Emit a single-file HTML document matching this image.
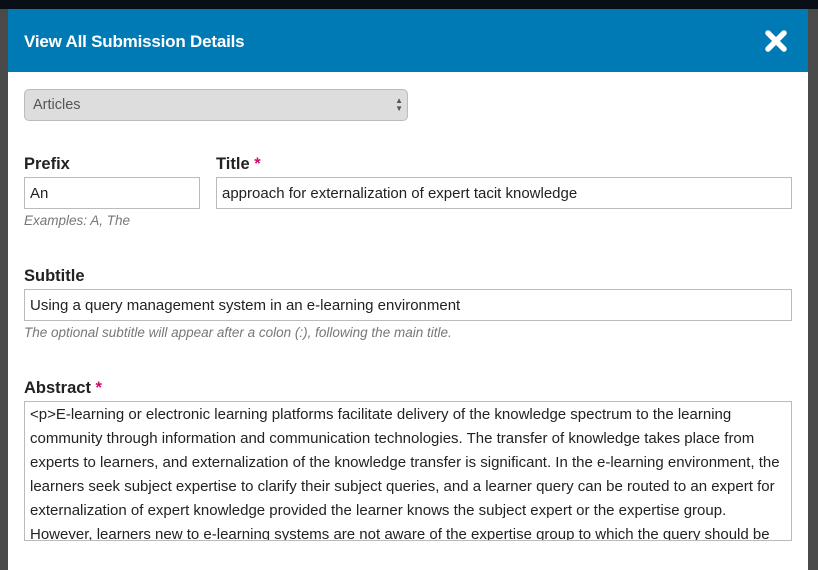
<!DOCTYPE html>
<html><head><style>
*{box-sizing:border-box;margin:0;padding:0}
body{width:818px;height:570px;overflow:hidden;background:#4a4a4a;font-family:"Liberation Sans",sans-serif;position:relative}
.top{position:absolute;left:0;top:0;width:818px;height:9px;background:#0a0f17}
.modal{position:absolute;left:8px;top:9px;width:800px;height:561px;background:#fff}
.hd{height:63px;background:#007ab5;color:#fff;font-weight:bold;font-size:17px;padding:23px 0 0 16px;letter-spacing:-0.2px}
.x{position:absolute;left:756px;top:20px;width:24px;height:24px}
.abs{position:absolute}
.lbl{font-weight:bold;font-size:16.5px;color:#222}
.req{color:#d00a6c}
.in{border:1px solid #bbb;font-size:15px;color:#222;padding:7px 5px 0;height:32px;white-space:nowrap}
.hint{font-style:italic;font-size:13.5px;color:#777}
.sel{background:#ddd;border:1px solid #bbb;border-radius:5px;font-size:14.5px;color:#555;padding:7px 8px}
.ta{border:1px solid #bbb;font-size:15px;color:#222;line-height:24px;padding:1px 5px 0;overflow:hidden;white-space:nowrap}
</style></head><body>
<div class="top"></div>
<div class="modal">
<div class="hd">View All Submission Details</div>
<svg class="x" viewBox="0 0 24 24"><path d="M4 4L20 20M20 4L4 20" stroke="#fff" stroke-width="5.5" stroke-linecap="round"/></svg>
<div class="abs sel" style="left:16px;top:80px;width:384px;height:32px">Articles<span style="position:absolute;right:4px;top:7px;font-size:8px;line-height:8px;color:#555">▲<br>▼</span></div>
<div class="abs lbl" style="left:16px;top:146px">Prefix</div>
<div class="abs lbl" style="left:208px;top:146px">Title <span class="req">*</span></div>
<div class="abs in" style="left:16px;top:168px;width:176px">An</div>
<div class="abs in" style="left:208px;top:168px;width:576px">approach for externalization of expert tacit knowledge</div>
<div class="abs hint" style="left:16px;top:204px">Examples: A, The</div>
<div class="abs lbl" style="left:16px;top:258px">Subtitle</div>
<div class="abs in" style="left:16px;top:280px;width:768px">Using a query management system in an e-learning environment</div>
<div class="abs hint" style="left:16px;top:316px">The optional subtitle will appear after a colon (:), following the main title.</div>
<div class="abs lbl" style="left:16px;top:370px">Abstract <span class="req">*</span></div>
<div class="abs ta" style="left:16px;top:392px;width:768px;height:140px">&lt;p&gt;E-learning or electronic learning platforms facilitate delivery of the knowledge spectrum to the learning<br>community through information and communication technologies. The transfer of knowledge takes place from<br>experts to learners, and externalization of the knowledge transfer is significant. In the e-learning environment, the<br>learners seek subject expertise to clarify their subject queries, and a learner query can be routed to an expert for<br>externalization of expert knowledge provided the learner knows the subject expert or the expertise group.<br>However, learners new to e-learning systems are not aware of the expertise group to which the query should be</div>
</div>
</body></html>
